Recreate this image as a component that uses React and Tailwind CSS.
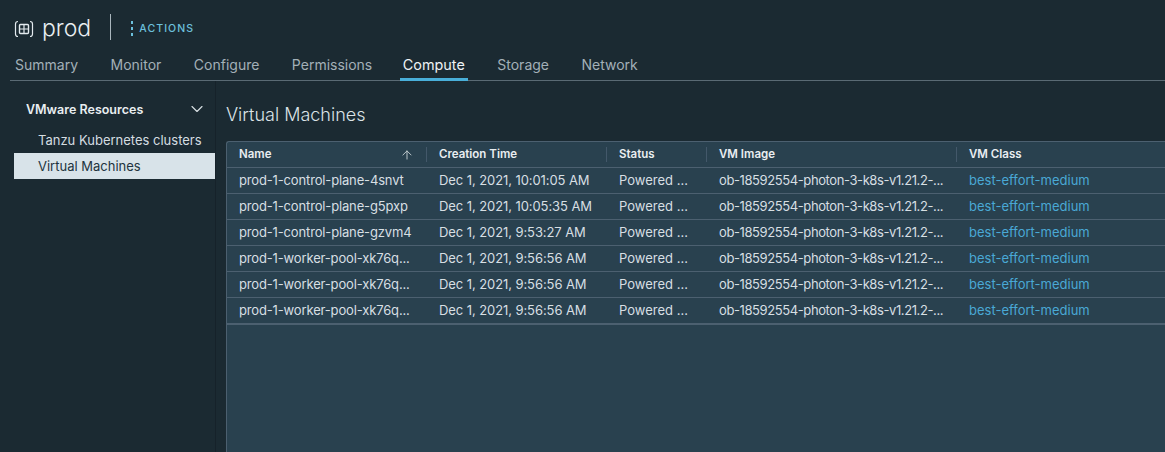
import { ArrowUp, ChevronDown } from "lucide-react";

const tabs = ["Summary", "Monitor", "Configure", "Permissions", "Compute", "Storage", "Network"];

const vms = [
  ["prod-1-control-plane-4snvt", "Dec 1, 2021, 10:01:05 AM"],
  ["prod-1-control-plane-g5pxp", "Dec 1, 2021, 10:05:35 AM"],
  ["prod-1-control-plane-gzvm4", "Dec 1, 2021, 9:53:27 AM"],
  ["prod-1-worker-pool-xk76q...", "Dec 1, 2021, 9:56:56 AM"],
  ["prod-1-worker-pool-xk76q...", "Dec 1, 2021, 9:56:56 AM"],
  ["prod-1-worker-pool-xk76q...", "Dec 1, 2021, 9:56:56 AM"],
];

const NamespaceIcon = () => (
  <svg viewBox="0 0 20 20" className="w-[20px] h-[20px] text-[#e3eaee]" fill="none" stroke="currentColor" strokeWidth="1.2">
    <path d="M4 2.500C2.500 2.500 1.500 3.500 1.500 5v10c0 1.500 1 2.500 2.500 2.500M16 2.500c1.500 0 2.500 1 2.500 2.500v10c0 1.500-1 2.500-2.500 2.500" />
    <rect x="5.500" y="5.500" width="9" height="9" rx="1" strokeWidth="1.4" />
    <path d="M5.500 10h9M10 5.500v9" />
  </svg>
);

const HeaderCell = ({ width, children }) => (
  <div className={`${width} shrink-0 h-[15px] flex items-center pt-[1px] px-[12px] border-r border-[#43586a] last:border-r-0 font-semibold text-[11.5px] text-[#e9eef1]`}>
    {children}
  </div>
);

export default function App() {
  return (
    <div className="h-[452px] w-[1165px] overflow-hidden bg-[#1b2a32] text-[#c9d3d9] font-['Inter',sans-serif]">
      {/* title */}
      <div className="h-[41px] pt-[15px] pl-[14px] flex items-start">
        <div className="flex items-center h-[27px]">
          <NamespaceIcon />
          <span className="ml-[8px] text-[23px] font-light text-[#e9eef1] leading-none">prod</span>
        </div>
        <div className="ml-[19px] w-px h-[26px] -mt-px bg-[#aab6bd]" />
        <div className="ml-[20px] h-[27px] flex items-center gap-[6px]">
          <div className="flex flex-col gap-[3px]">
            <span className="w-[2px] h-[3px] bg-[#6cc0dc]" />
            <span className="w-[2px] h-[3px] bg-[#6cc0dc]" />
            <span className="w-[2px] h-[3px] bg-[#6cc0dc]" />
          </div>
          <span className="text-[10.5px] font-medium tracking-[1.1px] text-[#6cc0dc]">ACTIONS</span>
        </div>
      </div>

      {/* tabs */}
      <div className="ml-[10px] h-[40px] flex items-end gap-[26.5px] border-b border-[#5a6a74] pl-[2px]">
        {tabs.map((t) => (
          <div
            key={t}
            className={
              t === "Compute"
                ? "h-[39px] px-[3px] pt-[10px] -ml-[2px] flex items-center border-b-[3px] border-[#49afd9] text-[14.4px] text-[#eef2f4] -mb-px"
                : "h-[39px] px-[3px] pt-[8px] flex items-center text-[14px] text-[#a3b0b8]"
            }
          >
            {t}
          </div>
        ))}
      </div>

      <div className="flex h-[371px]">
        {/* sidebar */}
        <div className="w-[216px] shrink-0 border-r border-[#16222a] pl-[14px] pt-[15px]">
          <div className="h-[26px] pl-[12px] pr-[8px] flex items-center justify-between text-[12.5px] font-semibold text-[#e9eef1]">
            <span className="mt-[2px]">VMware Resources</span>
            <ChevronDown size={20} strokeWidth={1.4} className="text-[#d5dde1]" />
          </div>
          <div className="mt-[5px] h-[26px] pl-[24px] pt-[1px] flex items-center text-[13px] text-[#d5dde1] whitespace-nowrap">
            Tanzu Kubernetes clusters
          </div>
          <div className="h-[26px] pl-[24px] pt-[1px] flex items-center text-[13px] bg-[#d8e3e9] text-[#22343e]">
            Virtual Machines
          </div>
        </div>

        {/* main */}
        <div className="flex-1 min-w-0 pl-[10px]">
          <h1 className="mt-[21px] text-[18px] leading-[26px] font-light text-[#dbe3e7]">Virtual Machines</h1>
          <div className="mt-[13px] w-[960px] h-[320px] bg-[#29414f] border-l border-t border-[#4c6070] rounded-tl-[3px] text-[13px]">
            <div className="h-[26px] flex items-center border-b border-[#4c6070]">
              <HeaderCell width="w-[200px]">
                <span className="flex-1">Name</span>
                <ArrowUp size={14} strokeWidth={1.6} className="text-[#c3ccd1]" />
              </HeaderCell>
              <HeaderCell width="w-[180px]">Creation Time</HeaderCell>
              <HeaderCell width="w-[100px]">Status</HeaderCell>
              <HeaderCell width="w-[250px]">VM Image</HeaderCell>
              <HeaderCell width="w-[200px]">VM Class</HeaderCell>
            </div>
            {vms.map(([name, time], i) => (
              <div
                key={i}
                className={`flex items-center text-[#d7dfe3] border-[#4c6070] ${i === vms.length - 1 ? "h-[27px] border-b-2" : "h-[26px] border-b"}`}
              >
                <div className="w-[200px] shrink-0 pl-[12px] whitespace-nowrap tracking-[-0.15px]">{name}</div>
                <div className="w-[180px] shrink-0 pl-[12px] whitespace-nowrap tracking-[-0.08px]">{time}</div>
                <div className="w-[100px] shrink-0 pl-[12px] whitespace-nowrap">Powered ...</div>
                <div className="w-[250px] shrink-0 pl-[12px] whitespace-nowrap tracking-[-0.4px]">ob-18592554-photon-3-k8s-v1.21.2-...</div>
                <div className="pl-[12px] text-[#49a9d5] whitespace-nowrap">best-effort-medium</div>
              </div>
            ))}
          </div>
        </div>
      </div>
    </div>
  );
}
